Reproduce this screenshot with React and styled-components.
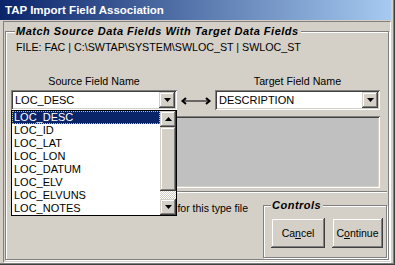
import React from 'react';
import styled, { createGlobalStyle } from 'styled-components';

const GlobalStyle = createGlobalStyle`
  html, body {
    margin: 0;
    padding: 0;
    background: #d4d0c8;
  }
  body {
    font-family: "Liberation Sans", Arial, sans-serif;
    font-size: 11px;
    color: #000;
  }
`;

const sunken = `
  box-shadow: inset 1px 1px 0 #808080, inset -1px -1px 0 #fff,
    inset 2px 2px 0 #404040, inset -2px -2px 0 #d4d0c8;
`;

const raised = `
  box-shadow: inset -1px -1px 0 #404040, inset 1px 1px 0 #d4d0c8,
    inset -2px -2px 0 #808080, inset 2px 2px 0 #fff;
`;

const Window = styled.div`
  width: 395px;
  height: 265px;
  box-sizing: border-box;
  background: #d4d0c8;
  display: flex;
  flex-direction: column;
  padding: 0 4px 2px 0;
  box-shadow: inset -1px -1px 0 #404040, inset -2px -2px 0 #808080;
`;

const TitleBar = styled.div`
  height: 20px;
  flex: 0 0 20px;
  box-sizing: border-box;
  padding: 2px 0 0 5px;
  background: linear-gradient(to right, #0a246a, #a6caf0);
  color: #fff;
  font-weight: bold;
  font-size: 11.5px;
  line-height: 17px;
  white-space: nowrap;
`;

const Client = styled.div`
  flex: 1;
  display: flex;
  flex-direction: column;
  margin: 1px 0 0 3px;
  border-top: 1px solid #808080;
  border-left: 1px solid #808080;
  border-right: 1px solid #fff;
  border-bottom: 1px solid #fff;
`;

const Group = styled.fieldset`
  margin: ${p => p.$margin || '0'};
  padding: 0;
  min-width: 0;
  border: 1px solid #808080;
  box-shadow: inset 1px 1px 0 #fff, 1px 1px 0 #fff;
  ${p => p.$grow && 'flex: 1;'}
  ${p => p.$width && `width: ${p.$width}px; flex: 0 0 ${p.$width}px;`}
  ${p => p.$height && `height: ${p.$height}px;`}
  box-sizing: border-box;
`;

const Legend = styled.legend`
  margin-left: ${p => p.$indent}px;
  padding: 0 2px 0 1px;
  background: #d4d0c8;
  font-weight: bold;
  font-style: italic;
  font-size: 11px;
  letter-spacing: 0.5px;
  line-height: 13px;
`;

const FileLine = styled.div`
  margin-top: 3px;
  padding-left: 10px;
  line-height: 13px;
  font-size: 10.7px;
  white-space: nowrap;
`;

const FieldGrid = styled.div`
  display: grid;
  grid-template-columns: 166px 38px 165px;
  row-gap: 2px;
  margin: 21px 0 0 5px;
`;

const FieldLabel = styled.div`
  grid-row: 1;
  grid-column: ${p => p.$col};
  text-align: center;
  line-height: 13px;
  font-size: 10.7px;
`;

const ComboWrap = styled.div`
  position: relative;
  grid-row: 2;
  grid-column: ${p => p.$col};
`;

const Combo = styled.div`
  height: 20px;
  box-sizing: border-box;
  padding: 2px;
  display: flex;
  align-items: center;
  background: #fff;
  ${sunken}
`;

const ComboText = styled.span`
  flex: 1;
  padding-left: 2px;
  line-height: 16px;
  white-space: nowrap;
`;

const ArrowButton = styled.div`
  width: 16px;
  height: 16px;
  flex: 0 0 16px;
  display: flex;
  align-items: center;
  justify-content: center;
  background: #d4d0c8;
  ${raised}
`;

const LinkArrow = styled.div`
  grid-row: 2;
  grid-column: 2;
  display: flex;
  align-items: center;
`;

const DropList = styled.div`
  position: absolute;
  top: 100%;
  left: 0;
  z-index: 10;
  width: 166px;
  box-sizing: border-box;
  border: 1px solid #000;
  background: #fff;
  display: flex;
`;

const Rows = styled.div`
  flex: 1;
`;

const Row = styled.div`
  height: 13px;
  line-height: 13px;
  padding-left: 2px;
  box-sizing: border-box;
  white-space: nowrap;
  ${p =>
    p.$selected &&
    `
    background: #0a246a;
    color: #fff;
    outline: 1px dotted #c8c070;
    outline-offset: -1px;
  `}
`;

const ScrollBar = styled.div`
  width: 16px;
  display: flex;
  flex-direction: column;
`;

const Thumb = styled.div`
  height: 64px;
  background: #d4d0c8;
  ${raised}
`;

const Track = styled.div`
  flex: 1;
  background: repeating-conic-gradient(#fff 0 25%, #d4d0c8 0 50%) 0 0 / 2px 2px;
`;

const Panel = styled.div`
  margin: 6px 0 0 5px;
  width: 369px;
  height: 72px;
  background: #c0c0c0;
  ${sunken}
`;

const Separator = styled.div`
  margin: 3px 1px 0 5px;
  border-top: 1px solid #808080;
  border-bottom: 1px solid #fff;
`;

const BottomRow = styled.div`
  display: flex;
  margin: 6px 1px 0 5px;
`;

const CheckRow = styled.div`
  flex: 0 0 237px;
  margin-top: 3px;
  display: flex;
  justify-content: flex-end;
  white-space: nowrap;
  line-height: 13px;
  font-size: 10.5px;
  align-self: flex-start;
`;

const Buttons = styled.div`
  display: flex;
  gap: 7px;
  margin-top: 6px;
  padding-left: 7px;
`;

const PushButton = styled.button`
  width: ${p => p.$w}px;
  height: 30px;
  padding: 0;
  border: none;
  background: #d4d0c8;
  font-family: "Liberation Sans", Arial, sans-serif;
  font-size: 10.5px;
  color: #000;
  ${raised}
`;

const Tri = ({ up }) => (
  <svg width="7" height="4" viewBox="0 0 7 4">
    <polygon points={up ? '3.5,0 7,4 0,4' : '0,0 7,0 3.5,4'} fill="#000" />
  </svg>
);

const fields = [
  'LOC_DESC',
  'LOC_ID',
  'LOC_LAT',
  'LOC_LON',
  'LOC_DATUM',
  'LOC_ELV',
  'LOC_ELVUNS',
  'LOC_NOTES',
];

export default function App() {
  return (
    <>
      <GlobalStyle />
      <Window>
        <TitleBar>TAP Import Field Association</TitleBar>
        <Client>
          <Group $grow $margin="3px 1px 2px 1px">
            <Legend $indent={9}>Match Source Data Fields With Target Data Fields</Legend>
            <FileLine>FILE: FAC | C:\SWTAP\SYSTEM\SWLOC_ST | SWLOC_ST</FileLine>

            <FieldGrid>
              <FieldLabel $col={1}>Source Field Name</FieldLabel>
              <FieldLabel $col={3}>Target Field Name</FieldLabel>

              <ComboWrap $col={1}>
                <Combo>
                  <ComboText>LOC_DESC</ComboText>
                  <ArrowButton>
                    <Tri />
                  </ArrowButton>
                </Combo>
                <DropList>
                  <Rows>
                    {fields.map((f, i) => (
                      <Row key={f} $selected={i === 0}>
                        {f}
                      </Row>
                    ))}
                  </Rows>
                  <ScrollBar>
                    <ArrowButton>
                      <Tri up />
                    </ArrowButton>
                    <Thumb />
                    <Track />
                    <ArrowButton>
                      <Tri />
                    </ArrowButton>
                  </ScrollBar>
                </DropList>
              </ComboWrap>

              <LinkArrow>
                <svg width="38" height="20" viewBox="0 0 38 20">
                  <polyline points="9,8 5.5,11 9,14" fill="none" stroke="#000" strokeWidth="2" />
                  <line x1="6" y1="11" x2="32" y2="11" stroke="#000" strokeWidth="1" />
                  <polyline points="29,8 32.5,11 29,14" fill="none" stroke="#000" strokeWidth="2" />
                </svg>
              </LinkArrow>

              <ComboWrap $col={3}>
                <Combo>
                  <ComboText>DESCRIPTION</ComboText>
                  <ArrowButton>
                    <Tri />
                  </ArrowButton>
                </Combo>
              </ComboWrap>
            </FieldGrid>

            <Panel />
            <Separator />

            <BottomRow>
              <CheckRow>for this type file</CheckRow>
              <Group $margin="0 0 0 auto" $width={124} $height={59}>
                <Legend $indent={7}>Controls</Legend>
                <Buttons>
                  <PushButton $w={54}>
                    Ca<u>n</u>cel
                  </PushButton>
                  <PushButton $w={51}>
                    C<u>o</u>ntinue
                  </PushButton>
                </Buttons>
              </Group>
            </BottomRow>
          </Group>
        </Client>
      </Window>
    </>
  );
}
